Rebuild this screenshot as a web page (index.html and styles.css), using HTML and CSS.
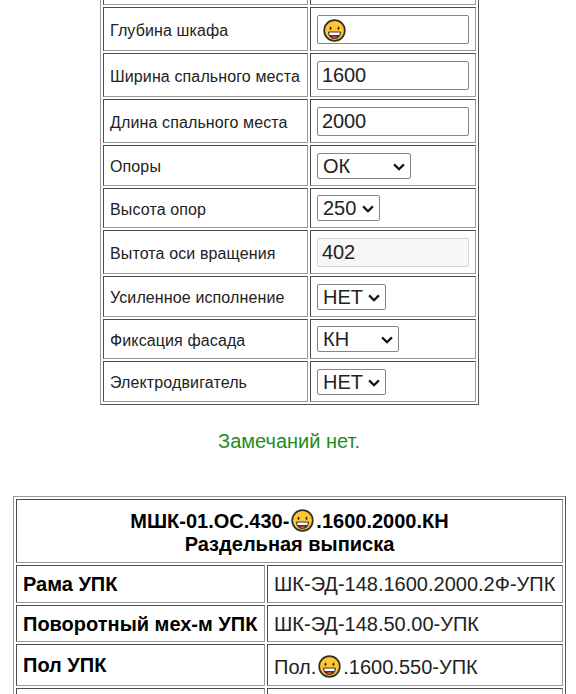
FILE: index.html
```html
<!DOCTYPE html>
<html lang="ru">
<head>
<meta charset="utf-8">
<title>Параметры</title>
<link rel="stylesheet" href="styles.css">
</head>
<body>
<svg width="0" height="0" class="defs">
  <symbol id="smile" viewBox="0 0 23 23">
    <circle cx="11.5" cy="11.5" r="10.300" fill="#ffc734" stroke="#33302b" stroke-width="1.700"/>
    <ellipse cx="7.500" cy="9.200" rx="0.900" ry="1.700" fill="#302b25"/>
    <ellipse cx="15.500" cy="9.200" rx="0.900" ry="1.700" fill="#302b25"/>
    <path d="M5.500 13h12c0 4-2.500 6.500-6 6.500s-6-2.500-6-6.500z" fill="#4a3328" stroke="#302b25" stroke-width="0.900"/>
    <path d="M6.100 13.500h10.800l-.6 2.500H6.700z" fill="#fff"/>
    <path d="M8.700 18.200q2.800-2.400 5.600 0q-2.800 1.900-5.600 0z" fill="#e53b2c"/>
  </symbol>
  <symbol id="chevron" viewBox="0 0 12 8">
    <path d="M1.100 1.400L6 6.300l4.900-4.900" fill="none" stroke="#111" stroke-width="2.200"/>
  </symbol>
</svg>
<table class="params">
  <tr class="cut"><td></td><td></td></tr>
  <tr class="tall"><td>Глубина шкафа</td><td><div class="input face"><svg class="smile"><use href="#smile"/></svg></div></td></tr>
  <tr class="tall"><td>Ширина спального места</td><td><div class="input">1600</div></td></tr>
  <tr class="tall"><td>Длина спального места</td><td><div class="input">2000</div></td></tr>
  <tr class="mid"><td>Опоры</td><td><div class="select w-ok">ОК<svg class="chev"><use href="#chevron"/></svg></div></td></tr>
  <tr class="low"><td>Высота опор</td><td><div class="select w-250">250<svg class="chev"><use href="#chevron"/></svg></div></td></tr>
  <tr class="tall"><td>Вытота оси вращения</td><td><div class="input disabled">402</div></td></tr>
  <tr class="mid"><td>Усиленное исполнение</td><td><div class="select w-net">НЕТ<svg class="chev"><use href="#chevron"/></svg></div></td></tr>
  <tr class="low"><td>Фиксация фасада</td><td><div class="select w-kn">КН<svg class="chev"><use href="#chevron"/></svg></div></td></tr>
  <tr class="mid"><td>Электродвигатель</td><td><div class="select w-net">НЕТ<svg class="chev"><use href="#chevron"/></svg></div></td></tr>
</table>
<p class="note">Замечаний нет.</p>
<table class="spec">
  <colgroup><col class="name"><col></colgroup>
  <tr class="head"><th colspan="2"><div>МШК-01.ОС.430-<svg class="smile"><use href="#smile"/></svg>.1600.2000.КН</div><div>Раздельная выписка</div></th></tr>
  <tr class="r1"><th>Рама УПК</th><td>ШК-ЭД-148.1600.2000.2Ф-УПК</td></tr>
  <tr class="r2"><th>Поворотный мех-м УПК</th><td>ШК-ЭД-148.50.00-УПК</td></tr>
  <tr class="r3"><th>Пол УПК</th><td>Пол.<svg class="smile"><use href="#smile"/></svg>.1600.550-УПК</td></tr>
  <tr class="last"><th></th><td></td></tr>
</table>
</body>
</html>
```

FILE: styles.css
```css
* { box-sizing: border-box; }
html { overflow: hidden; }
body {
  margin: 0;
  height: 694px;
  overflow: hidden;
  background: #fff;
  color: #222;
  font: 20px/24px "Liberation Sans", Arial, sans-serif;
}
.defs { display: block; }
table {
  border: 1px solid;
  border-color: #999 #555 #555 #999;
  border-spacing: 2px;
  table-layout: fixed;
}
td, th {
  border: 1px solid;
  border-color: #4c4c4c #999 #999 #4c4c4c;
  padding: 0 6px;
  white-space: nowrap;
}
.params { width: 379px; margin: -8px 0 0 100px; }
.params td { vertical-align: top; padding-top: 7px; }
.params td:first-child {
  width: 205px;
  padding-top: 2px;
  font-size: 16px;
  line-height: 20px;
  letter-spacing: 0.12px;
  vertical-align: middle;
}
.params .cut td { height: 10px; padding: 0; }
.tall td { height: 44px; }
.mid td { height: 41px; }
.low td { height: 40px; }
.params .low td + td { padding-top: 6px; }
.params .tall td:first-child,
.params .low td:first-child { padding-top: 4px; }
.input, .select {
  border: 1px solid #858585;
  border-radius: 2px;
  background: #fff;
}
.input { width: 152px; height: 29px; padding: 0 4px; line-height: 26px; letter-spacing: -0.1px; }
.face { padding: 3px 5px; }
.face .smile { display: block; margin: 0; }
.disabled { background: #f7f7f7; border-color: #d5d5d5; }
.select {
  display: flex;
  align-items: center;
  justify-content: space-between;
  height: 26px;
  padding: 0 5px;
  line-height: 24px;
}
.chev { width: 12px; height: 8px; margin-top: 1px; flex: none; }
.w-ok { width: 94px; }
.w-250 { width: 63px; }
.w-net { width: 69px; }
.w-kn { width: 82px; }
.note { margin: 24px 0 0; padding-left: 2px; text-align: center; color: #228b22; }
.smile { width: 23px; height: 23px; vertical-align: -4px; margin: 0 2px; }
.spec { width: 553px; margin: 43px 0 0 13px; }
.spec .name { width: 249px; }
.spec th { color: #000; text-align: left; }
.spec .head th { height: 64px; padding-top: 3px; text-align: center; line-height: 23px; }
.r1 th, .r1 td { height: 38px; }
.r2 th, .r2 td { height: 37px; }
.r3 th, .r3 td { height: 42px; }
.r3 td { padding-top: 4px; }
.last th, .last td { height: 20px; }
```
